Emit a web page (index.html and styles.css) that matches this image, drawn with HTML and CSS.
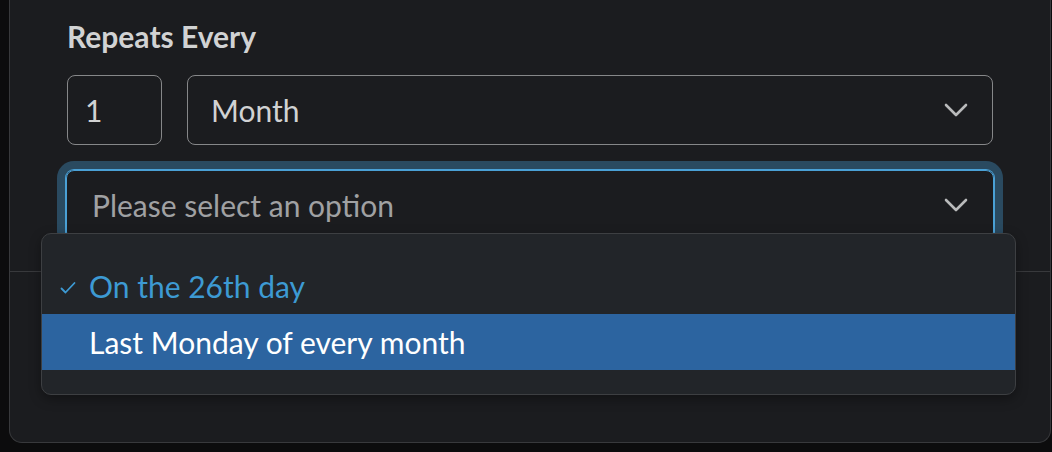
FILE: index.html
```html
<!DOCTYPE html>
<html>
<head>
<meta charset="utf-8">
<link rel="stylesheet" href="styles.css">
</head>
<body>
<div class="panel">
  <div class="form">
    <div class="label">Repeats Every</div>
    <div class="row">
      <div class="field num">1</div>
      <div class="field select">
        <span>Month</span>
        <svg class="chev" width="24" height="14" viewBox="0 0 24 14"><path d="M2 2 L12 12 L22 2" fill="none" stroke="#b9babb" stroke-width="2.6" stroke-linecap="round" stroke-linejoin="round"/></svg>
      </div>
    </div>
    <div class="field select focused">
      <span class="ph">Please select an option</span>
      <svg class="chev" width="24" height="14" viewBox="0 0 24 14"><path d="M2 2 L12 12 L22 2" fill="none" stroke="#b9babb" stroke-width="2.6" stroke-linecap="round" stroke-linejoin="round"/></svg>
    </div>
  </div>
  <div class="footer"></div>
  <div class="menu">
    <div class="item selected">
      <svg class="check" width="16" height="14" viewBox="0 0 16 14"><path d="M1.5 7.5 L5.5 11.5 L14.5 2" fill="none" stroke="#3d9ad3" stroke-width="1.8" stroke-linecap="round" stroke-linejoin="round"/></svg>
      <span>On the 26th day</span>
    </div>
    <div class="item hover"><span>Last Monday of every month</span></div>
  </div>
</div>
</body>
</html>
```
FILE: styles.css
```css
* { box-sizing: border-box; }
html, body { margin: 0; padding: 0; }
body {
  background: #0c0c0d;
  font-family: Lato, "Noto Sans", sans-serif;
  width: 1052px;
  height: 452px;
  overflow: hidden;
}
.panel {
  position: relative;
  margin-left: 9px;
  width: 1042px;
  height: 443px;
  background: #1b1c1f;
  border: 1px solid #38393c;
  border-top: none;
  border-radius: 0 0 13px 13px;
}
.form {
  padding: 18px 57px 31px 57px;
  border-bottom: 1px solid #38393c;
}
.label {
  font-size: 30px;
  font-weight: 700;
  line-height: 36px;
  color: #d1d2d3;
}
.row {
  display: flex;
  gap: 25px;
  margin-top: 21px;
  margin-bottom: 25px;
}
.field {
  height: 70px;
  border: 1.5px solid #868789;
  border-radius: 8px;
  display: flex;
  align-items: center;
  font-size: 30px;
  color: #d1d2d3;
  padding-left: 17px;
}
.num { width: 95px; }
.select {
  flex: 1;
  justify-content: space-between;
  padding-left: 23px;
  padding-right: 24px;
}
.focused {
  margin-left: -1px;
  margin-right: -1px;
  border: 1px solid #4aa0d5;
  box-shadow: 0 0 0 1px #4aa0d5, 0 0 0 9px #2a4a60;
  padding-left: 25px;
  padding-right: 25px;
}
.ph { color: #a0a1a3; }
.chev { display: block; }
.footer { height: 170px; }
.menu {
  position: absolute;
  left: 31px;
  top: 233px;
  width: 975px;
  padding: 24px 0;
  background: #222529;
  border: 1px solid #3d3f42;
  border-radius: 10px;
  box-shadow: 0 4px 12px rgba(0,0,0,0.35);
}
.item {
  position: relative;
  height: 56px;
  display: flex;
  align-items: center;
  padding-left: 47px;
  font-size: 30px;
  color: #e8e8e8;
}
.item.selected { color: #3d9ad3; }
.item.hover { background: #2c64a0; color: #ffffff; }
.check {
  position: absolute;
  left: 18px;
  top: 23px;
}
```
